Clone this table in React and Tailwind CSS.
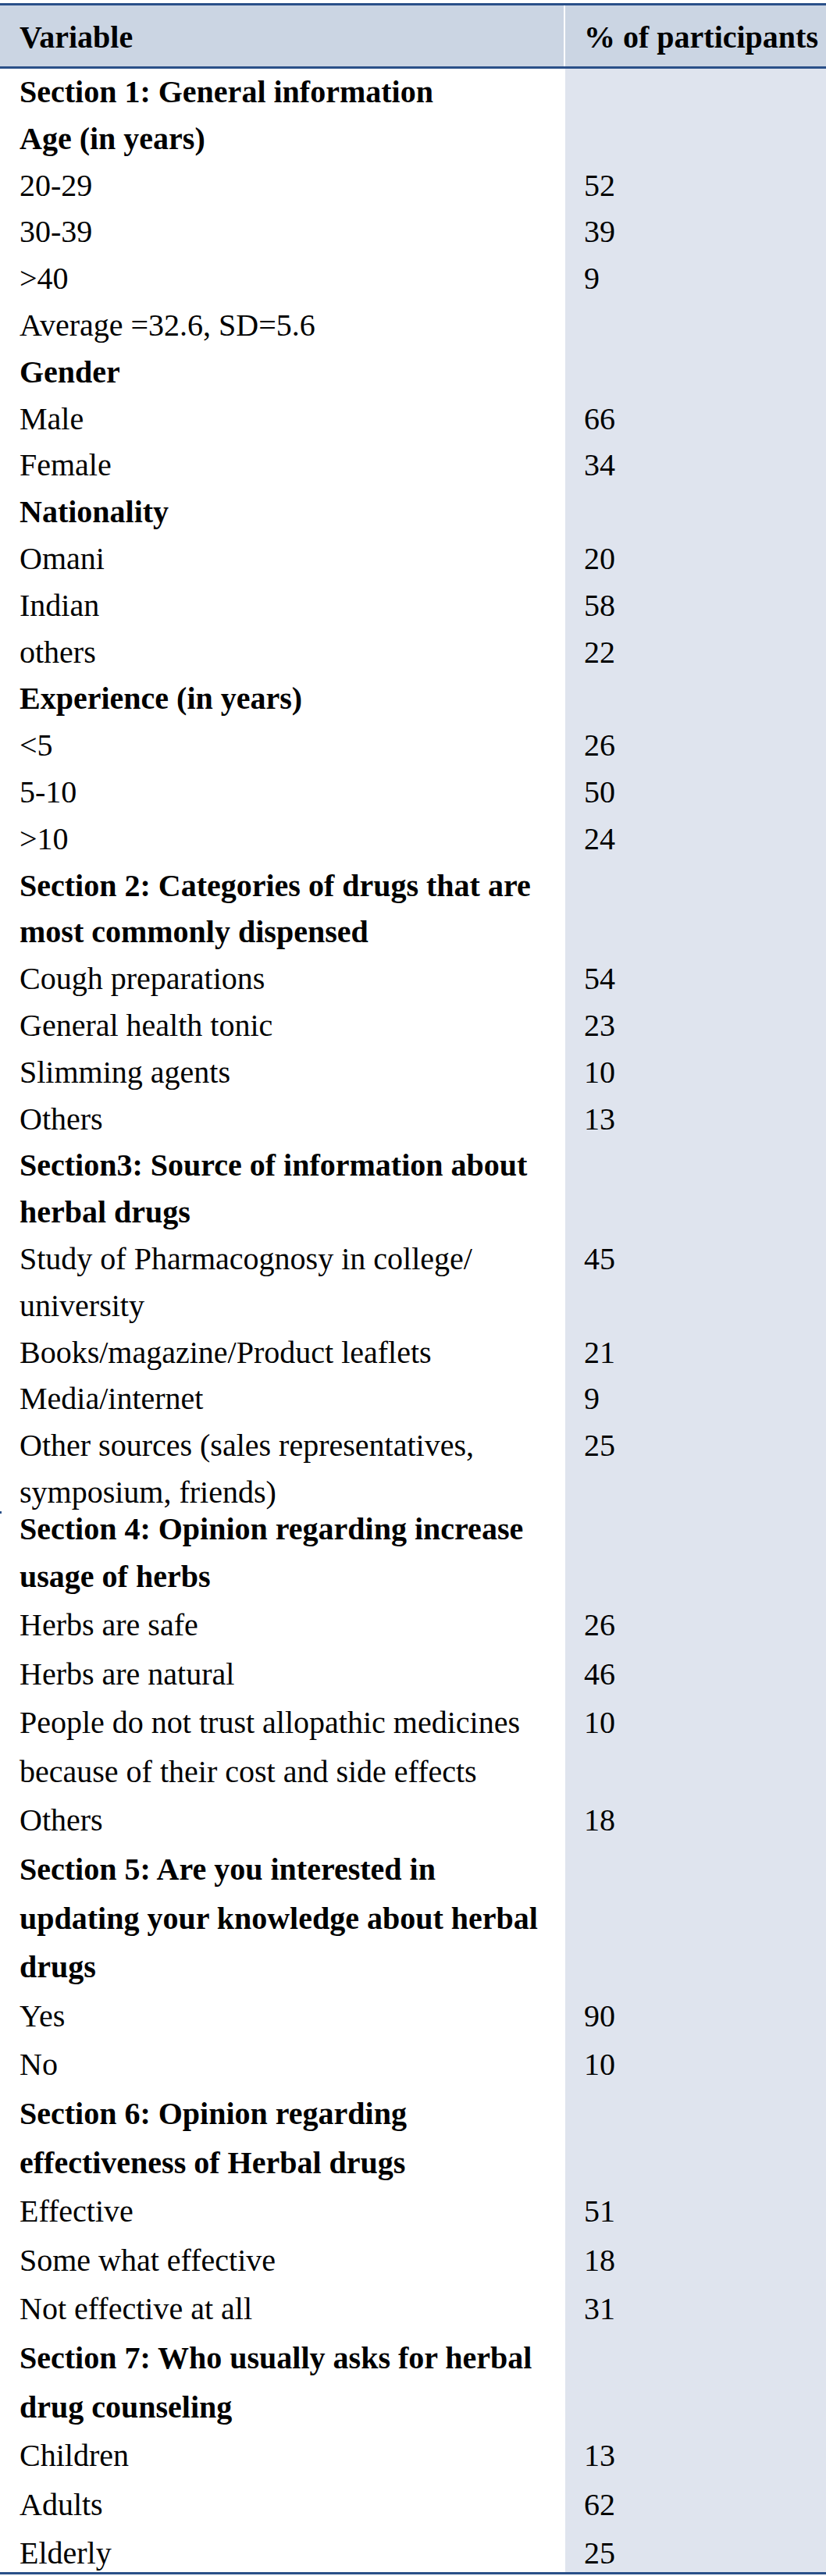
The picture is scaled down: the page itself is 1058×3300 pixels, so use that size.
import React from 'react';

// each row: lines of the left cell, optional value, bold for section headings
const rows = [
  { lines: ['Section 1: General information'], bold: true },
  { lines: ['Age (in years)'], bold: true },
  { lines: ['20-29'], value: '52' },
  { lines: ['30-39'], value: '39' },
  { lines: ['>40'], value: '9' },
  { lines: ['Average =32.6, SD=5.6'] },
  { lines: ['Gender'], bold: true },
  { lines: ['Male'], value: '66' },
  { lines: ['Female'], value: '34' },
  { lines: ['Nationality'], bold: true },
  { lines: ['Omani'], value: '20' },
  { lines: ['Indian'], value: '58' },
  { lines: ['others'], value: '22' },
  { lines: ['Experience (in years)'], bold: true },
  { lines: ['<5'], value: '26' },
  { lines: ['5-10'], value: '50' },
  { lines: ['>10'], value: '24' },
  { lines: ['Section 2: Categories of drugs that are', 'most commonly dispensed'], bold: true },
  { lines: ['Cough preparations'], value: '54' },
  { lines: ['General health tonic'], value: '23' },
  { lines: ['Slimming agents'], value: '10' },
  { lines: ['Others'], value: '13' },
  { lines: ['Section3: Source of information about', 'herbal drugs'], bold: true },
  { lines: ['Study of Pharmacognosy in college/', 'university'], value: '45' },
  { lines: ['Books/magazine/Product leaflets'], value: '21' },
  { lines: ['Media/internet'], value: '9' },
  { lines: ['Other sources (sales representatives,', 'symposium, friends)'], value: '25' },
  // the PDF squeezes this row up a little
  { lines: ['Section 4: Opinion regarding increase', 'usage of herbs'], bold: true, shift: true },
  { lines: ['Herbs are safe'], value: '26', wide: true },
  { lines: ['Herbs are natural'], value: '46', wide: true },
  { lines: ['People do not trust allopathic medicines', 'because of their cost and side effects'], value: '10', wide: true },
  { lines: ['Others'], value: '18', wide: true },
  { lines: ['Section 5: Are you interested in', 'updating your knowledge about herbal', 'drugs'], bold: true, wide: true },
  { lines: ['Yes'], value: '90', wide: true },
  { lines: ['No'], value: '10', wide: true },
  { lines: ['Section 6: Opinion regarding', 'effectiveness of Herbal drugs'], bold: true, wide: true },
  { lines: ['Effective'], value: '51', wide: true },
  { lines: ['Some what effective'], value: '18', wide: true },
  { lines: ['Not effective at all'], value: '31', wide: true },
  { lines: ['Section 7: Who usually asks for herbal', 'drug counseling'], bold: true, wide: true },
  { lines: ['Children'], value: '13', wide: true },
  { lines: ['Adults'], value: '62', wide: true },
  { lines: ['Elderly'], value: '25', wide: true },
];

function Row({ r }) {
  const lh = r.wide ? 'leading-[62.6px]' : 'leading-[59.8px]';
  return (
    <div className={`flex ${r.shift ? '-mt-[13px]' : ''}`}>
      <div className={`w-[722px] pl-[25px] whitespace-nowrap ${r.bold ? 'font-bold' : ''}`}>
        {r.lines.map((l, j) => (
          <div key={j} className={r.shift && j > 0 ? 'leading-[62.6px]' : lh}>
            {l}
          </div>
        ))}
      </div>
      <div className="w-[2px] bg-white" />
      <div className={`flex-1 bg-[#dfe4ee] pl-[24px] ${lh}`}>{r.value}</div>
    </div>
  );
}

export default function App() {
  return (
    <div className="w-[1058px] h-[3300px] bg-white pt-[4px] text-black text-[40px] font-['Liberation_Serif','Times_New_Roman',serif]">
      {/* Header */}
      <div className="flex h-[84px] bg-[#cbd5e3] border-t-[3px] border-b-[3px] border-[#2a5089] leading-[60px]">
        <div className="w-[722px] pl-[25px] pt-[11px] font-bold whitespace-nowrap">Variable</div>
        <div className="w-[2px] bg-white" />
        <div className="flex-1 pl-[24px] pt-[11px] font-bold whitespace-nowrap">% of participants</div>
      </div>

      {/* Body */}
      <div className="relative h-[3210px] overflow-hidden border-b-[3px] border-[#2a5089]">
        {rows.map((r, i) => (
          <Row key={i} r={r} />
        ))}
        <div className="absolute left-0 top-[1848px] w-[2px] h-[3px] bg-[#2a5089]" />
      </div>
    </div>
  );
}
